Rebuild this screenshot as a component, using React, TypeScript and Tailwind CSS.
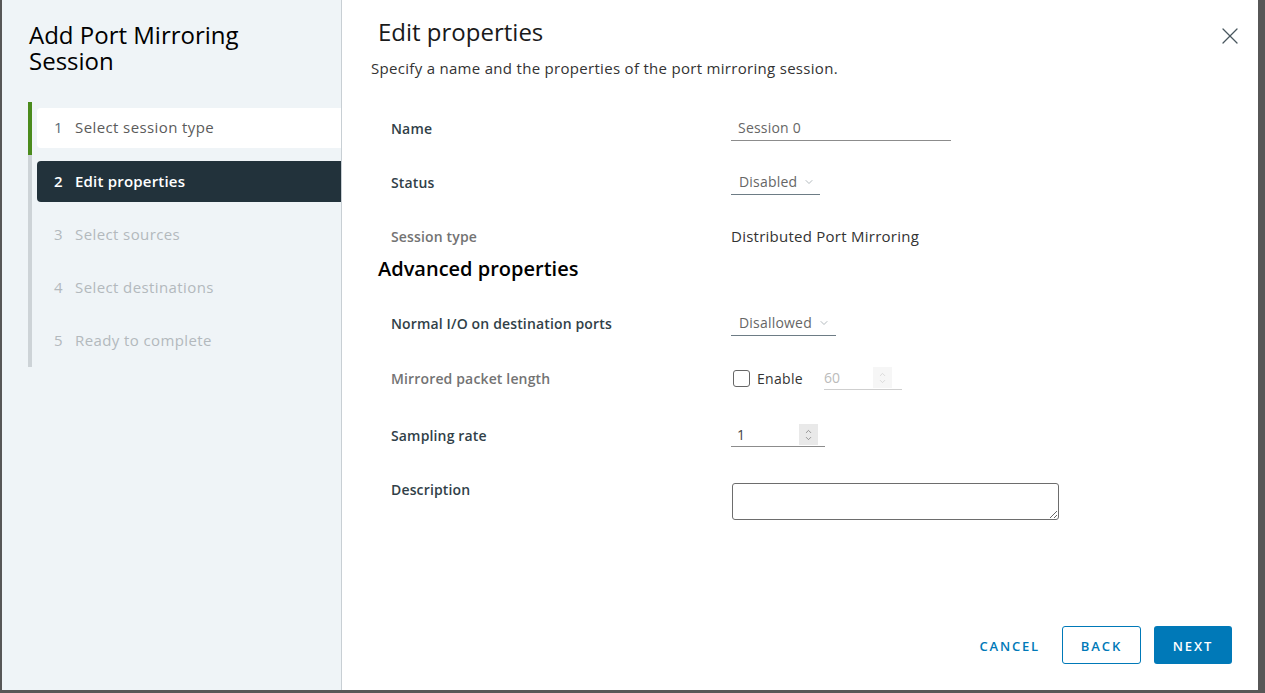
import { ChevronDown, ChevronUp, X } from 'lucide-react'

const font = { fontFamily: '"Open Sans", "Liberation Sans", sans-serif' }

const steps = [
  { n: 1, label: 'Select session type', state: 'done' },
  { n: 2, label: 'Edit properties', state: 'active' },
  { n: 3, label: 'Select sources', state: 'todo' },
  { n: 4, label: 'Select destinations', state: 'todo' },
  { n: 5, label: 'Ready to complete', state: 'todo' },
]

function StepNav() {
  return (
    <div className="mt-[28px] ml-[26px] flex flex-col">
      {steps.map((s) => (
        <div
          key={s.n}
          className={`flex h-[53px] border-l-4 pl-[5px] ${s.state === 'done' ? 'border-[#4b8b1d]' : 'border-[#cdd3d7]'}`}
        >
          {s.state === 'done' && (
            <div className="mt-[6px] flex h-[40px] flex-1 items-center rounded-l-[4px] bg-white pb-[1px] pl-[17px] text-[15px] tracking-[0.4px] text-[#5b5b5b]">
              <span className="w-[21px] text-[#5b6b75]">{s.n}</span>
              {s.label}
            </div>
          )}
          {s.state === 'active' && (
            <div className="mt-[6px] flex h-[41px] flex-1 items-center rounded-l-[4px] bg-[#22323b] pb-[1px] pl-[17px] text-[15px] font-semibold tracking-[0.2px] text-white">
              <span className="w-[21px]">{s.n}</span>
              {s.label}
            </div>
          )}
          {s.state === 'todo' && (
            <div className="flex flex-1 items-center pb-[1px] pl-[17px] text-[15px] tracking-[0.4px] text-[#b3b9bd]">
              <span className="w-[21px]">{s.n}</span>
              {s.label}
            </div>
          )}
        </div>
      ))}
    </div>
  )
}

function Label({ children, muted }: { children: React.ReactNode; muted?: boolean }) {
  return (
    <div
      className={`w-[340px] text-[14px] font-semibold tracking-[0.15px] ${muted ? 'text-[#737373]' : 'text-[#313f48]'}`}
    >
      {children}
    </div>
  )
}

function SelectBox({ value, width }: { value: string; width: string }) {
  return (
    <div
      className={`flex h-[25px] items-center border-b border-[#6d7c85] pl-[8px] text-[14px] tracking-[0.2px] text-[#666] ${width}`}
    >
      {value}
      <ChevronDown className="ml-[6px] h-[12px] w-[12px] text-[#9aa3a8]" strokeWidth={1.5} />
    </div>
  )
}

function Spinner({ disabled }: { disabled?: boolean }) {
  return (
    <div
      className={`flex h-[21px] w-[19px] flex-col items-center justify-center ${disabled ? 'bg-[#f6f6f6] text-[#d2d2d2]' : 'bg-[#e9e9e9] text-[#7a7a7a]'}`}
    >
      <ChevronUp className="-mb-[2px] h-[9px] w-[9px]" strokeWidth={2} />
      <ChevronDown className="h-[9px] w-[9px]" strokeWidth={2} />
    </div>
  )
}

export default function App() {
  return (
    <div className="flex h-[693px] w-full bg-[#575757] pl-[2px] pr-[7px] pb-[3px]" style={font}>
      <div className="flex h-[690px] flex-1 overflow-hidden">
        {/* Left side - wizard steps */}
        <aside className="w-[340px] border-r border-[#c8cfd4] bg-[#eff4f7]">
          <h1 className="mt-[22px] ml-[27px] text-[24px] leading-[26px] font-normal text-black">
            Add Port Mirroring
            <br />
            Session
          </h1>
          <StepNav />
        </aside>

        {/* Right side - form */}
        <main className="relative flex flex-1 flex-col bg-white">
          <button className="absolute top-[22px] right-[14px] text-[#49575f]">
            <X className="h-[28px] w-[28px]" strokeWidth={1.1} />
          </button>

          <h2 className="mt-[16px] ml-[36px] text-[24px] leading-[32px] text-[#1a1a1a]">Edit properties</h2>
          <p className="mt-[10px] ml-[29px] text-[15px] leading-[20px] tracking-[0.3px] text-[#333]">
            Specify a name and the properties of the port mirroring session.
          </p>

          <div className="mt-[23px] ml-[49px] flex flex-col">
            <div className="flex h-[54px] items-center">
              <Label>Name</Label>
              <div className="flex h-[25px] w-[220px] items-center border-b border-[#8c8c8c] pl-[7px] text-[14px] tracking-[0.2px] text-[#666]">
                Session 0
              </div>
            </div>

            <div className="flex h-[54px] items-center">
              <Label>Status</Label>
              <SelectBox value="Disabled" width="w-[89px]" />
            </div>

            <div className="flex h-[49px] items-center pt-[6px]">
              <Label muted>Session type</Label>
              <div className="text-[15px] tracking-[0.25px] text-[#333]">Distributed Port Mirroring</div>
            </div>

            <h3 className="-ml-[13px] h-[20px] pt-px text-[20px] leading-[20px] font-semibold text-black">
              Advanced properties
            </h3>

            <div className="mt-[18px] flex h-[54px] items-center">
              <Label>Normal I/O on destination ports</Label>
              <SelectBox value="Disallowed" width="w-[105px]" />
            </div>

            <div className="flex h-[56px] items-center">
              <Label muted>Mirrored packet length</Label>
              <div className="ml-[2px] h-[17px] w-[17px] rounded-[3px] border border-[#666]" />
              <span className="ml-[7px] text-[14px] tracking-[0.3px] text-[#333]">Enable</span>
              <div className="ml-[21px] flex h-[24px] w-[78px] items-center border-b border-[#cfcfcf] text-[14px] text-[#bbb]">
                <span className="flex-1">60</span>
                <span className="mr-[10px]">
                  <Spinner disabled />
                </span>
              </div>
            </div>

            <div className="flex h-[58px] items-center">
              <Label>Sampling rate</Label>
              <div className="flex h-[24px] w-[94px] items-center border-b border-[#8c8c8c] pl-[6px] text-[14px] text-[#444]">
                <span className="flex-1">1</span>
                <span className="mr-[7px]">
                  <Spinner />
                </span>
              </div>
            </div>

            <div className="flex items-start">
              <div className="pt-[15px]">
                <Label>Description</Label>
              </div>
              <textarea className="mt-[19px] ml-px h-[37px] w-[327px] rounded-[3px] border border-[#6d6d6d] bg-white" />
            </div>
          </div>

          {/* Footer buttons */}
          <div className="mt-auto mb-[26px] mr-[26px] flex items-center justify-end">
            <button className="h-[38px] px-[12px] pt-[3px] text-[13px] font-semibold tracking-[0.14em] text-[#0079b8]">
              CANCEL
            </button>
            <button className="ml-[10px] h-[38px] w-[79px] rounded-[3px] border border-[#0079b8] pt-[3px] text-[13px] font-semibold tracking-[0.15em] text-[#0079b8]">
              BACK
            </button>
            <button className="ml-[13px] h-[38px] w-[78px] rounded-[3px] bg-[#0079b8] pt-[3px] text-[13px] font-semibold tracking-[0.15em] text-white">
              NEXT
            </button>
          </div>
        </main>
      </div>
    </div>
  )
}
